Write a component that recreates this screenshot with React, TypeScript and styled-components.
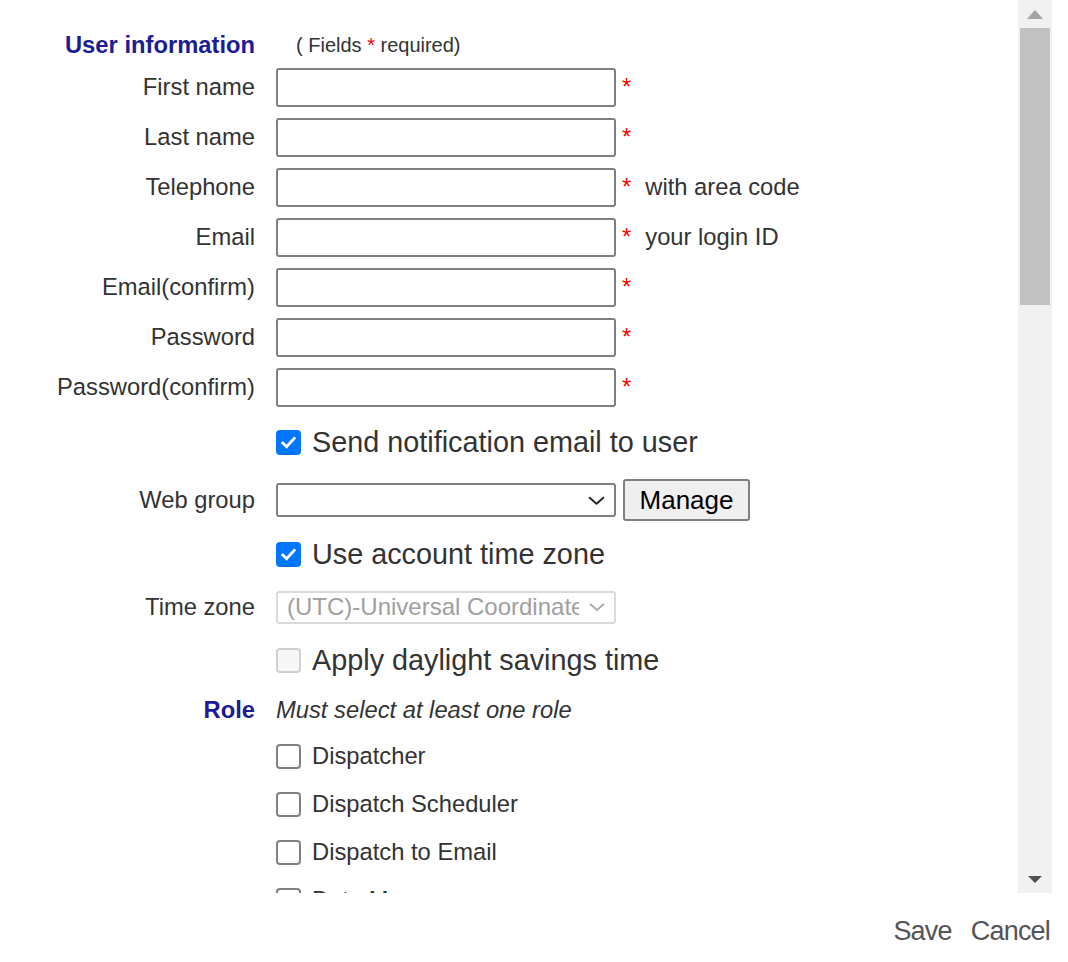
import React from "react";
import styled, { createGlobalStyle } from "styled-components";

const GlobalStyle = createGlobalStyle`
  html, body { margin: 0; padding: 0; background: #fff; }
  body { font-family: "Liberation Sans", Arial, sans-serif; color: #333; }
  * { box-sizing: border-box; }
`;

const Page = styled.div`
  width: 1068px;
  height: 962px;
  display: flex;
  flex-direction: column;
  overflow: hidden;
`;

const Viewport = styled.div`
  width: 1052px;
  height: 893px;
  display: flex;
  flex-shrink: 0;
`;

const ScrollArea = styled.div`
  flex: 1;
  overflow: hidden;
  padding-top: 28px;
`;

const Scrollbar = styled.div`
  width: 34px;
  background: #f1f1f1;
  display: flex;
  flex-direction: column;
  align-items: center;
`;

const ArrowBox = styled.div`
  height: 28px;
  width: 100%;
  display: flex;
  align-items: center;
  justify-content: center;
  flex-shrink: 0;
`;

const Thumb = styled.div`
  width: 30px;
  height: 277px;
  background: #c1c1c1;
  flex-shrink: 0;
`;

const Spacer = styled.div`
  flex: 1;
`;

const Row = styled.div<{ $h: number }>`
  display: grid;
  grid-template-columns: 255px 1fr;
  column-gap: 21px;
  align-items: center;
  height: ${(p) => p.$h}px;
`;

const Label = styled.div<{ $section?: boolean }>`
  text-align: right;
  font-size: 23.75px;
  white-space: nowrap;
  color: ${(p) => (p.$section ? "#1c1c94" : "#333")};
  font-weight: ${(p) => (p.$section ? 700 : 400)};
`;

const Field = styled.div`
  display: flex;
  align-items: center;
  min-width: 0;
`;

const RequiredNote = styled.span`
  font-size: 20px;
  padding-left: 20px;
  color: #333;
  white-space: nowrap;
`;

const Star = styled.span`
  color: #ff0000;
  font-size: 23.75px;
  margin-left: 6px;
  align-self: center;
`;

const NoteStar = styled.span`
  color: #ff0000;
`;

const Hint = styled.span`
  font-size: 23.75px;
  margin-left: 14px;
  color: #333;
  white-space: nowrap;
`;

const TextInput = styled.input`
  width: 340px;
  height: 39px;
  border: 2px solid #808080;
  border-radius: 3px;
  background: #fff;
  font-size: 20px;
  font-family: inherit;
  padding: 0 6px;
  margin: 0;
  outline: none;
`;

const SelectBox = styled.div<{ $disabled?: boolean }>`
  width: 340px;
  height: ${(p) => (p.$disabled ? 33 : 34)}px;
  border: 2px solid ${(p) => (p.$disabled ? "#dadada" : "#808080")};
  border-radius: 3px;
  background: #fff;
  display: flex;
  align-items: center;
  padding: 0 9px 0 9px;
`;

const SelectText = styled.span<{ $disabled?: boolean }>`
  flex: 1;
  min-width: 0;
  overflow: hidden;
  white-space: nowrap;
  font-size: 24px;
  color: ${(p) => (p.$disabled ? "#a0a0a0" : "#000")};
  margin-right: 10px;
`;

const ManageButton = styled.button`
  margin-left: 7px;
  width: 127px;
  height: 42px;
  background: #efefef;
  border: 2px solid #808080;
  border-radius: 3px;
  font-family: inherit;
  font-size: 26px;
  color: #000;
  padding: 0;
  cursor: pointer;
`;

const CheckLine = styled.label<{ $large?: boolean }>`
  display: flex;
  align-items: center;
  gap: 11px;
  font-size: ${(p) => (p.$large ? "28.8px" : "23.75px")};
  color: #333;
  white-space: nowrap;
`;

const Box = styled.span<{ $checked?: boolean; $disabled?: boolean }>`
  width: 25px;
  height: 25px;
  flex-shrink: 0;
  border-radius: 4px;
  display: flex;
  align-items: center;
  justify-content: center;
  background: ${(p) => (p.$checked ? "#0075ff" : p.$disabled ? "#f7f7f7" : "#fff")};
  border: ${(p) =>
    p.$checked ? "none" : p.$disabled ? "2px solid #d0d0d0" : "2px solid #808080"};
`;

const Italic = styled.span`
  font-size: 23.75px;
  font-style: italic;
  color: #333;
  white-space: nowrap;
`;

const Footer = styled.div`
  flex: 1;
  display: flex;
  justify-content: flex-end;
  align-items: center;
  padding-right: 18px;
  padding-top: 7px;
  gap: 19px;
`;

const FooterLink = styled.span`
  font-size: 27px;
  color: #555;
  letter-spacing: -0.8px;
  cursor: pointer;
`;

const Chevron = ({ color, w, h }: { color: string; w: number; h: number }) => (
  <svg width={w} height={h} viewBox="0 0 16 8" style={{ flexShrink: 0 }}>
    <polyline points="1,1 8,7 15,1" fill="none" stroke={color} strokeWidth="1.8" />
  </svg>
);

const Checkbox = ({ checked, disabled }: { checked?: boolean; disabled?: boolean }) => (
  <Box $checked={checked} $disabled={disabled}>
    {checked && (
      <svg width="19" height="19" viewBox="0 0 16 16">
        <path d="M3.2 8.4 L6.4 11.6 L12.8 4.6" fill="none" stroke="#fff" strokeWidth="2.4" strokeLinecap="square" />
      </svg>
    )}
  </Box>
);

const fields: { label: string; hint?: string }[] = [
  { label: "First name" },
  { label: "Last name" },
  { label: "Telephone", hint: "with area code" },
  { label: "Email", hint: "your login ID" },
  { label: "Email(confirm)" },
  { label: "Password" },
  { label: "Password(confirm)" },
];

const roles = ["Dispatcher", "Dispatch Scheduler", "Dispatch to Email", "Data Manager"];

export default function App() {
  return (
    <>
      <GlobalStyle />
      <Page>
        <Viewport>
          <ScrollArea>
            <Row $h={34}>
              <Label $section>User information</Label>
              <Field>
                <RequiredNote>
                  ( Fields <NoteStar>*</NoteStar> required)
                </RequiredNote>
              </Field>
            </Row>
            {fields.map((f) => (
              <Row $h={50} key={f.label}>
                <Label>{f.label}</Label>
                <Field>
                  <TextInput type={f.label.startsWith("Password") ? "password" : "text"} />
                  <Star>*</Star>
                  {f.hint && <Hint>{f.hint}</Hint>}
                </Field>
              </Row>
            ))}
            <Row $h={60}>
              <span />
              <CheckLine $large>
                <Checkbox checked />
                Send notification email to user
              </CheckLine>
            </Row>
            <Row $h={56}>
              <Label>Web group</Label>
              <Field>
                <SelectBox>
                  <SelectText />
                  <Chevron color="#222" w={17} h={9} />
                </SelectBox>
                <ManageButton>Manage</ManageButton>
              </Field>
            </Row>
            <Row $h={52}>
              <span />
              <CheckLine $large>
                <Checkbox checked />
                Use account time zone
              </CheckLine>
            </Row>
            <Row $h={54}>
              <Label>Time zone</Label>
              <Field>
                <SelectBox $disabled>
                  <SelectText $disabled>(UTC)-Universal Coordinated Time</SelectText>
                  <Chevron color="#a8a8a8" w={16} h={8} />
                </SelectBox>
              </Field>
            </Row>
            <Row $h={53}>
              <span />
              <CheckLine $large>
                <Checkbox disabled />
                Apply daylight savings time
              </CheckLine>
            </Row>
            <Row $h={45}>
              <Label $section>Role</Label>
              <Field>
                <Italic>Must select at least one role</Italic>
              </Field>
            </Row>
            {roles.map((r) => (
              <Row $h={48} key={r}>
                <span />
                <CheckLine>
                  <Checkbox />
                  {r}
                </CheckLine>
              </Row>
            ))}
          </ScrollArea>
          <Scrollbar>
            <ArrowBox>
              <svg width="16" height="9" viewBox="0 0 16 9">
                <polygon points="0,9 8,0 16,9" fill="#a3a3a3" />
              </svg>
            </ArrowBox>
            <Thumb />
            <Spacer />
            <ArrowBox>
              <svg width="14" height="7" viewBox="0 0 14 7">
                <polygon points="0,0 14,0 7,7" fill="#505050" />
              </svg>
            </ArrowBox>
          </Scrollbar>
        </Viewport>
        <Footer>
          <FooterLink>Save</FooterLink>
          <FooterLink>Cancel</FooterLink>
        </Footer>
      </Page>
    </>
  );
}
